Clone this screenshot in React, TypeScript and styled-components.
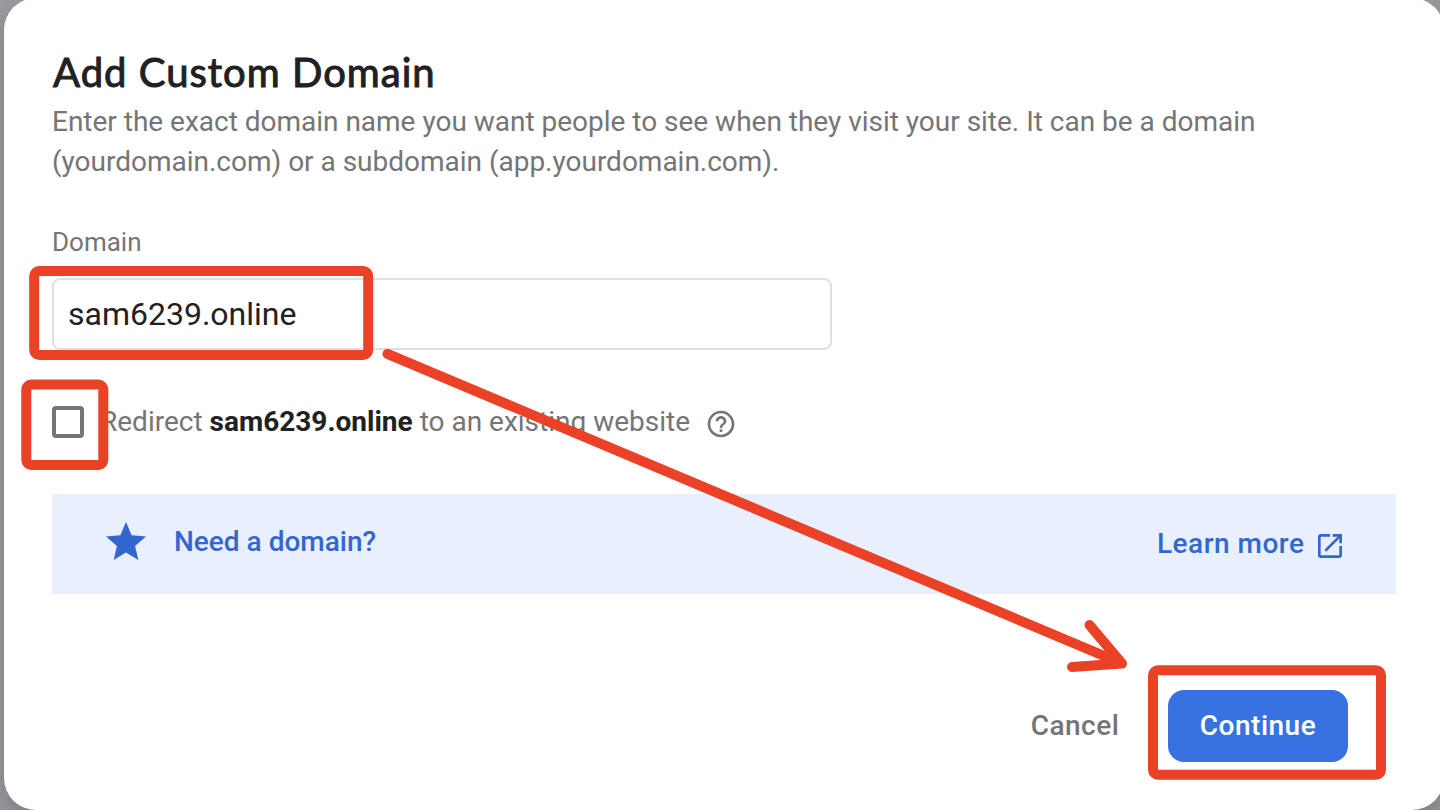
import React from "react";
import styled, { createGlobalStyle } from "styled-components";

const GlobalStyle = createGlobalStyle`
  *, *::before, *::after { box-sizing: border-box; }
  html, body { margin: 0; padding: 0; overflow: hidden; }
  body { font-family: Roboto, "Liberation Sans", sans-serif; }
`;

const Backdrop = styled.div`
  position: relative;
  width: 1440px;
  height: 810px;
  overflow: hidden;
  background: #9a9ca1;
`;

const Dialog = styled.main`
  display: flex;
  flex-direction: column;
  width: 1440px;
  height: 812px;
  margin: -2px 0 0 4px;
  padding: 48px 48px 48px;
  border-radius: 32px;
  background: #fff;
  box-shadow: 0 12px 28px rgba(0, 0, 0, 0.22);
`;

const Title = styled.h1`
  margin: 0 0 0 1px;
  height: 56px;
  font: 400 40px/52px Lato, "Open Sans", sans-serif;
  letter-spacing: 1.02px;
  color: #212121;
  -webkit-text-stroke: 1px #212121;
  white-space: nowrap;
`;

const Description = styled.p`
  margin: 0;
  width: 1300px;
  font-size: 28px;
  line-height: 40px;
  letter-spacing: -0.012px;
  color: #757575;
`;

const FieldLabel = styled.label`
  margin-top: 40px;
  font-size: 26px;
  line-height: 40px;
  color: #757575;
`;

const DomainInput = styled.div`
  display: flex;
  align-items: center;
  width: 780px;
  height: 72px;
  margin-top: 16px;
  padding: 0 14px;
  border: 2px solid #e0e0e0;
  border-radius: 8px;
  font-size: 32px;
  color: #212121;
`;

const RedirectRow = styled.div`
  display: flex;
  align-items: center;
  height: 40px;
  margin-top: 52px;
  font-size: 28px;
  color: #757575;
  white-space: nowrap;

  strong { font-weight: 700; color: #212121; }
`;

const RedirectText = styled.span`
  padding-bottom: 2px;
`;

const Checkbox = styled.span`
  width: 32px;
  height: 32px;
  margin-right: 16px;
  border: 4px solid #757575;
  border-radius: 4px;
`;

const HelpIcon = styled.svg`
  width: 32px;
  height: 32px;
  margin: 4px 0 0 15px;
  fill: #757575;
`;

const Banner = styled.section`
  display: flex;
  align-items: center;
  justify-content: space-between;
  height: 100px;
  margin-top: 52px;
  padding: 0 50px;
  background: #e8effd;
  color: #3367d0;
  font-size: 28px;
  font-weight: 500;
`;

const BannerLead = styled.div`
  display: flex;
  align-items: center;
  height: 48px;
  margin-top: -4px;
`;

const BannerText = styled.span`
  padding-bottom: 2px;
`;

const StarIcon = styled.svg`
  width: 48px;
  height: 48px;
  margin-right: 24px;
  fill: currentColor;
`;

const LearnMore = styled.a`
  display: flex;
  align-items: center;
  letter-spacing: 0.5px;
`;

const LaunchIcon = styled.svg`
  width: 32px;
  height: 32px;
  margin: 4px 0 0 9.5px;
  fill: currentColor;
`;

const Actions = styled.footer`
  display: flex;
  justify-content: flex-end;
  margin-top: 96px;
  padding-right: 48px;
`;

const Button = styled.button<{ $primary?: boolean }>`
  height: 72px;
  width: ${(p) => (p.$primary ? 180 : 186)}px;
  padding: 0;
  border: 0;
  border-radius: 16px;
  background: ${(p) => (p.$primary ? "#3872e0" : "transparent")};
  color: ${(p) => (p.$primary ? "#fff" : "#757575")};
  font: 500 28px/72px Roboto, sans-serif;
  letter-spacing: 0.5px;
`;

const Annotations = styled.svg`
  position: absolute;
  inset: 0;
  width: 1440px;
  height: 810px;
  fill: none;
  stroke: #eb4126;
  stroke-width: 10;
  stroke-linecap: round;
  stroke-linejoin: round;
  pointer-events: none;
`;

export default function App() {
  return (
    <Backdrop>
      <GlobalStyle />
      <Dialog>
        <Title>Add Custom Domain</Title>
        <Description>
          Enter the exact domain name you want people to see when they visit your site. It can be a domain
          <br />
          (yourdomain.com) or a subdomain (app.yourdomain.com).
        </Description>
        <FieldLabel>Domain</FieldLabel>
        <DomainInput>sam6239.online</DomainInput>
        <RedirectRow>
          <Checkbox />
          <RedirectText>
            Redirect <strong>sam6239.online</strong> to an existing website
          </RedirectText>
          <HelpIcon viewBox="0 0 24 24">
            <path d="M11 18h2v-2h-2v2zm1-16C6.48 2 2 6.48 2 12s4.480 10 10 10 10-4.480 10-10S17.520 2 12 2zm0 18c-4.410 0-8-3.590-8-8s3.590-8 8-8 8 3.590 8 8-3.590 8-8 8zm0-14c-2.210 0-4 1.790-4 4h2c0-1.100.9-2 2-2s2 .9 2 2c0 2-3 1.750-3 5h2c0-2.250 3-2.500 3-5 0-2.210-1.790-4-4-4z" />
          </HelpIcon>
        </RedirectRow>
        <Banner>
          <BannerLead>
            <StarIcon viewBox="0 0 24 24">
              <path d="M12 17.270 18.180 21l-1.640-7.030L22 9.240l-7.190-.61L12 2 9.190 8.630 2 9.240l5.460 4.730L5.820 21z" />
            </StarIcon>
            <BannerText>Need a domain?</BannerText>
          </BannerLead>
          <LearnMore>
            <BannerText>Learn more</BannerText>
            <LaunchIcon viewBox="0 0 24 24">
              <path d="M19 19H5V5h7V3H5c-1.110 0-2 .9-2 2v14c0 1.100.89 2 2 2h14c1.100 0 2-.9 2-2v-7h-2v7zM14 3v2h3.590l-9.830 9.830 1.410 1.410L19 6.410V10h2V3h-7z" />
            </LaunchIcon>
          </LearnMore>
        </Banner>
        <Actions>
          <Button>Cancel</Button>
          <Button $primary>Continue</Button>
        </Actions>
      </Dialog>
      <Annotations viewBox="0 0 1440 810">
        <rect x="34.200" y="271" width="334" height="84" rx="5" />
        <rect x="26.300" y="384.500" width="77" height="80.500" rx="5" />
        <rect x="1153" y="670.300" width="228" height="104.500" rx="5" />
        <path d="M387.500 353.800 1122 663.500M1089.500 625 1122 663.500 1072 667" />
      </Annotations>
    </Backdrop>
  );
}
